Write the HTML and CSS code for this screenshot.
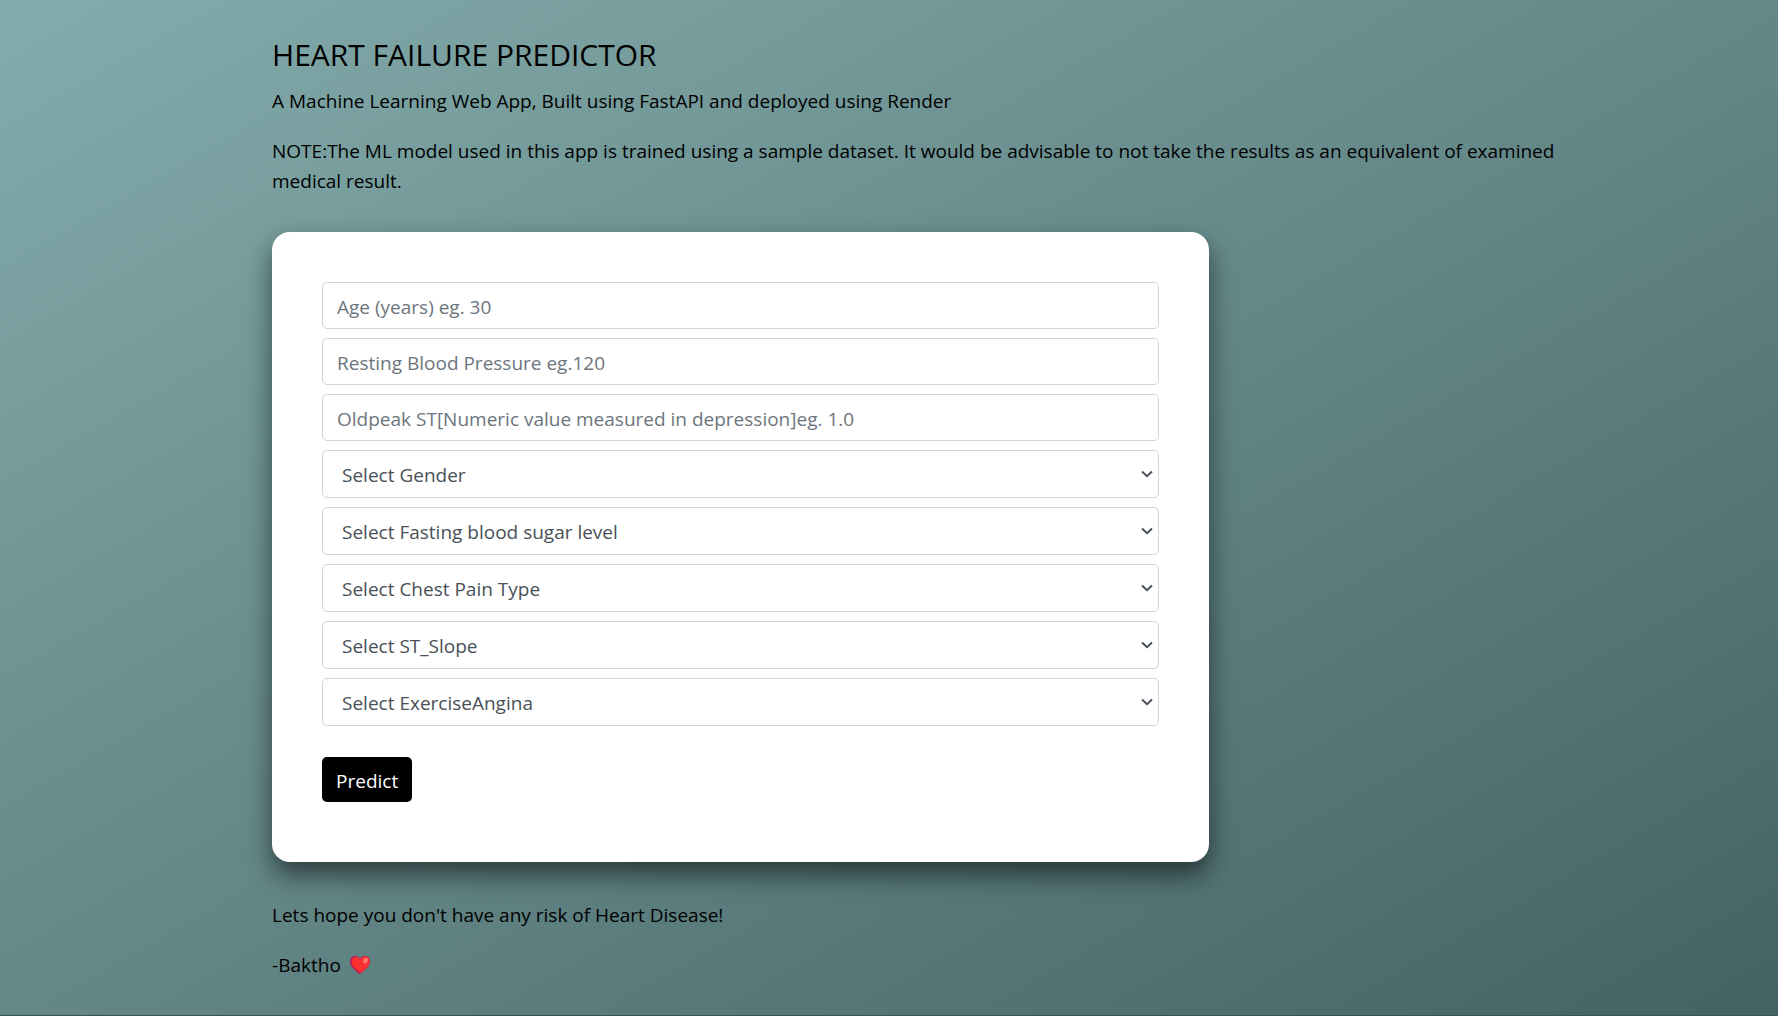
FILE: index.html
```html
<!DOCTYPE html>
<html lang="en">
<head>
<meta charset="utf-8">
<meta name="viewport" content="width=device-width, initial-scale=1">
<title>Heart Failure Predictor</title>
<link rel="stylesheet" href="styles.css">
</head>
<body>
<main class="page">
  <header class="intro">
    <h1 class="title">HEART FAILURE PREDICTOR</h1>
    <p class="text">A Machine Learning Web App, Built using FastAPI and deployed using Render</p>
    <p class="text">NOTE:The ML model used in this app is trained using a sample dataset. It would be advisable to not take the results as an equivalent of examined medical result.</p>
  </header>
  <form class="card">
    <div class="fields">
      <input class="field" type="text" name="age" aria-label="Age" placeholder="Age (years) eg. 30">
      <input class="field" type="text" name="bp" aria-label="Resting blood pressure" placeholder="Resting Blood Pressure eg.120">
      <input class="field" type="text" name="oldpeak" aria-label="Oldpeak ST" placeholder="Oldpeak ST[Numeric value measured in depression]eg. 1.0">
      <div class="select-wrap">
        <select class="field select" name="gender" aria-label="Gender"><option>Select Gender</option></select>
        <svg class="chevron" viewBox="0 0 12 8" aria-hidden="true"><path d="M1 1.5L6 6.2L11 1.5"/></svg>
      </div>
      <div class="select-wrap">
        <select class="field select" name="sugar" aria-label="Fasting blood sugar level"><option>Select Fasting blood sugar level</option></select>
        <svg class="chevron" viewBox="0 0 12 8" aria-hidden="true"><path d="M1 1.5L6 6.2L11 1.5"/></svg>
      </div>
      <div class="select-wrap">
        <select class="field select" name="pain" aria-label="Chest pain type"><option>Select Chest Pain Type</option></select>
        <svg class="chevron" viewBox="0 0 12 8" aria-hidden="true"><path d="M1 1.5L6 6.2L11 1.5"/></svg>
      </div>
      <div class="select-wrap">
        <select class="field select" name="slope" aria-label="ST slope"><option>Select ST_Slope</option></select>
        <svg class="chevron" viewBox="0 0 12 8" aria-hidden="true"><path d="M1 1.5L6 6.2L11 1.5"/></svg>
      </div>
      <div class="select-wrap">
        <select class="field select" name="angina" aria-label="Exercise angina"><option>Select ExerciseAngina</option></select>
        <svg class="chevron" viewBox="0 0 12 8" aria-hidden="true"><path d="M1 1.5L6 6.2L11 1.5"/></svg>
      </div>
    </div>
    <button class="predict" type="submit">Predict</button>
  </form>
  <footer class="outro">
    <p class="text">Lets hope you don't have any risk of Heart Disease!</p>
    <p class="text signature">-Baktho
      <svg class="heart" viewBox="0 0 20 18" role="img" aria-label="heart">
        <path fill="#c2185b" d="M9.7 18C5.5 15 0 10.400 0 5.400C0 2.200 2.300 0 5.200 0C7.300 0 9 1 9.900 2.700C10.900 1 12.600 0 14.600 0C17.600 0 20 2.200 20 5.400C20 10.400 13.800 15 9.700 18Z"/>
        <path fill="#fb3131" d="M10.500 16.800C6.500 14 1.600 10.200 1.600 5.600C1.600 2.800 3.600 1 5.900 1C8 1 9.300 2.200 10.200 4C11 1.800 12.600 .3 14.800 .3C17.700 .3 19.800 2.400 19.800 5.300C19.800 10 14.400 14 10.500 16.800Z"/>
        <ellipse cx="15.500" cy="4.600" rx="2.200" ry="3" fill="#ff7c6c" transform="rotate(25 15.500 4.600)"/>
      </svg>
    </p>
  </footer>
</main>
</body>
</html>
```
FILE: styles.css
```css
* {
  box-sizing: border-box;
}

html {
  background: #3c5252;
}

body {
  margin: 0;
  font-family: "Segoe UI", "Open Sans", "Noto Sans", sans-serif;
  font-size: 19px;
  line-height: 30px;
  color: #000;
}

.page {
  min-height: calc(100vh - 1px);
  padding: 36px 10% 34px 15.3%;
  background: linear-gradient(to bottom right, #84acac, #446263);
}

.title {
  margin: 0 0 12px;
  font-size: 30px;
  font-weight: 400;
  line-height: 38px;
}

.text {
  margin: 0 0 20px;
}

.card {
  max-width: 937px;
  margin: 36px 0 38px;
  padding: 50px 50px 60px;
  border-radius: 18px;
  background: #fff;
  box-shadow: 0 13px 27px rgba(0, 0, 0, .54);
}

.fields {
  display: grid;
  gap: 9px;
  margin-bottom: 31px;
}

.field {
  display: block;
  width: 100%;
  height: 47px;
  padding: 2px 14px 0;
  border: 1px solid #ced4da;
  border-radius: 5px;
  background: #fff;
  font: inherit;
  color: #495057;
}

.field::placeholder {
  color: #6c757d;
  opacity: 1;
}

.select-wrap {
  position: relative;
}

.select {
  height: 48px;
  padding-left: 19px;
  appearance: none;
}

.chevron {
  position: absolute;
  top: 20px;
  right: 6px;
  width: 12px;
  height: 8px;
  fill: none;
  stroke: #495057;
  stroke-width: 2;
  pointer-events: none;
}

.predict {
  display: block;
  height: 45px;
  padding: 2px 14px 0;
  border: 0;
  border-radius: 5px;
  background: #000;
  font: inherit;
  color: #fff;
}

.signature {
  display: flex;
  align-items: center;
  gap: 9px;
  margin-bottom: 0;
}

.heart {
  width: 20px;
  height: 18px;
}
```
